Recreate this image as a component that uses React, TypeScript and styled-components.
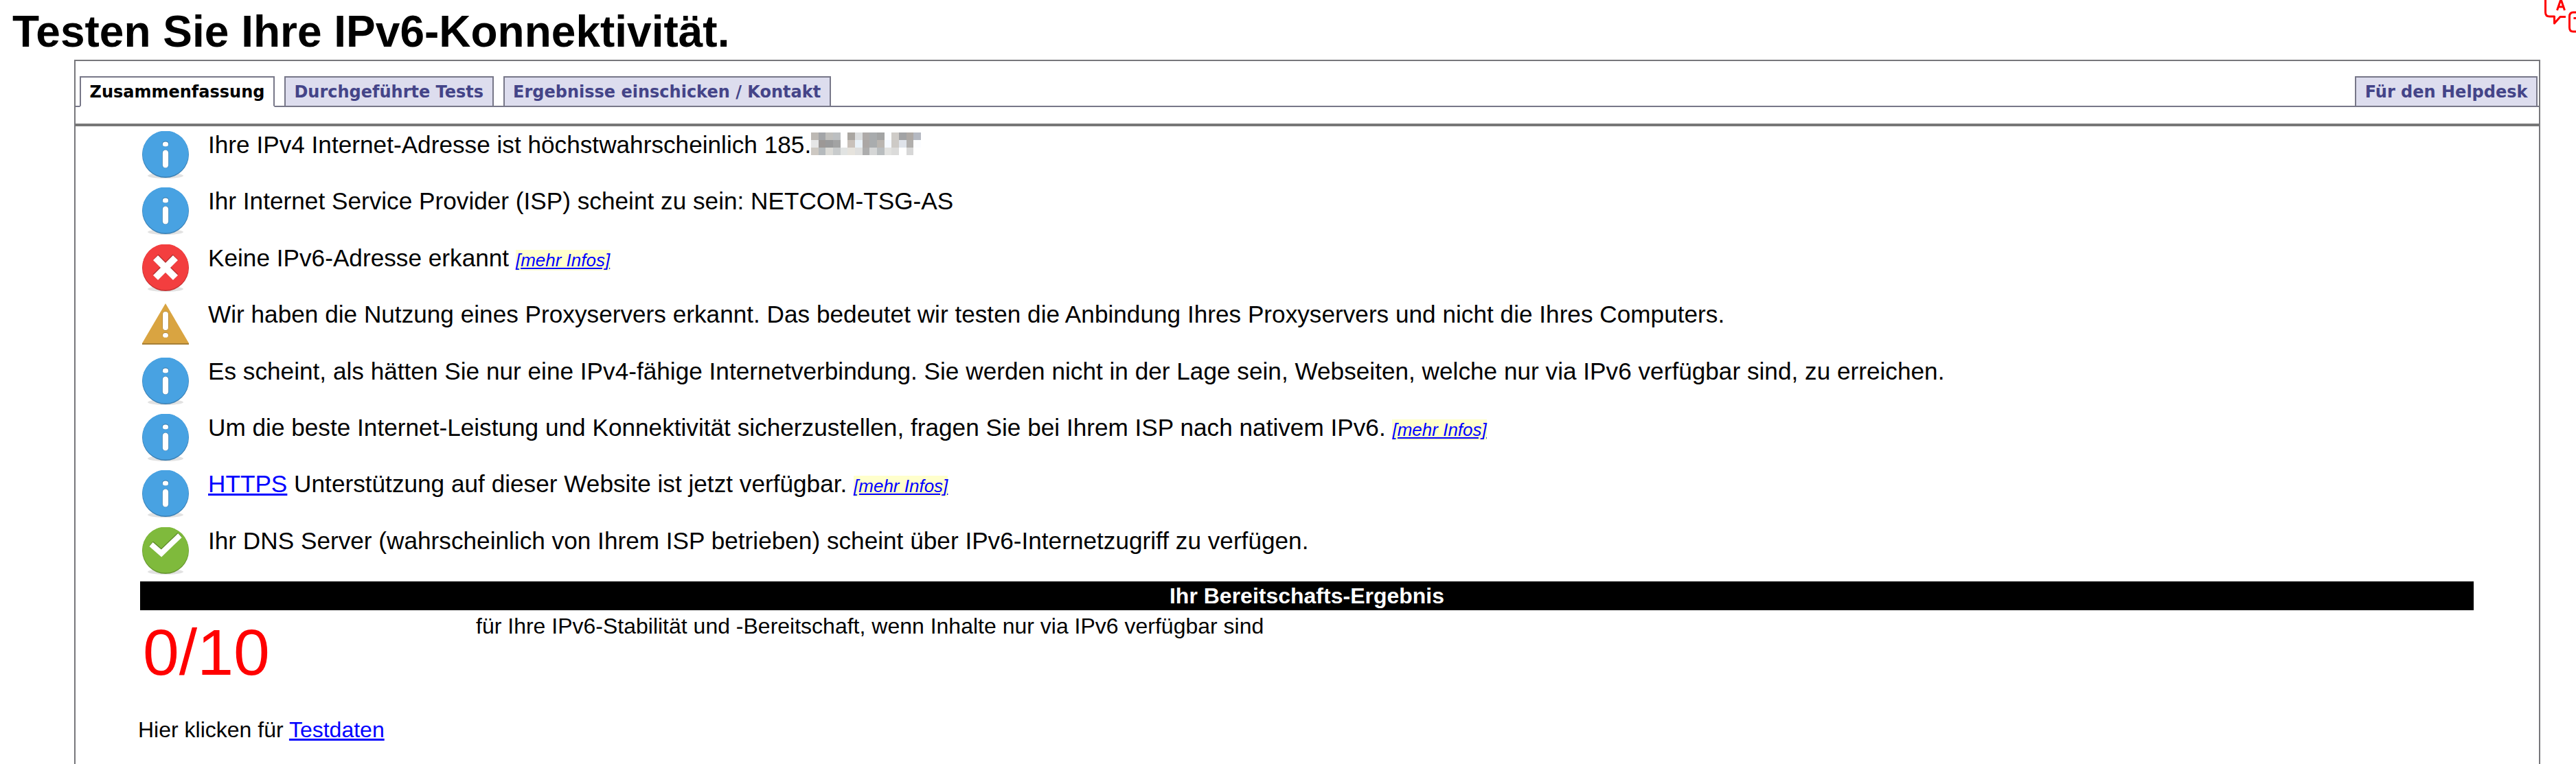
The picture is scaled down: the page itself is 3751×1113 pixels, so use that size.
import React from 'react';
import styled, { createGlobalStyle } from 'styled-components';

const GlobalStyle = createGlobalStyle`
  html, body {
    margin: 0;
    padding: 0;
    background: #fff;
    color: #000;
    overflow: hidden;
  }
  body {
    font-family: 'Liberation Sans', Arial, sans-serif;
  }
`;

const Page = styled.div`
  position: relative;
  width: 3751px;
  height: 1113px;
  overflow: hidden;
`;

const Title = styled.h1`
  margin: 0;
  padding: 10px 0 0 18px;
  height: 87px;
  box-sizing: border-box;
  font-size: 64px;
  line-height: 73px;
  font-weight: 700;
  white-space: nowrap;
`;

const Frame = styled.div`
  box-sizing: border-box;
  margin-left: 108px;
  width: 3591px;
  height: 1026px;
  border: 2px solid #77777b;
  border-bottom: none;
`;

const TabBar = styled.div`
  display: flex;
  align-items: flex-end;
  height: 67px;
  padding: 0 0 0 6px;
  box-sizing: border-box;
  border-bottom: 2px solid #778;
`;

const Tab = styled.a<{ $active?: boolean; $right?: boolean }>`
  box-sizing: border-box;
  height: 45px;
  margin-right: ${(p) => (p.$right ? '2px' : '14px')};
  margin-left: ${(p) => (p.$right ? 'auto' : '0')};
  margin-bottom: -2px;
  padding: 0 12.5px;
  display: flex;
  align-items: center;
  border: 2px solid #778;
  border-bottom: ${(p) => (p.$active ? '2px solid #fff' : '2px solid #778')};
  background: ${(p) => (p.$active ? '#fff' : '#dde')};
  color: ${(p) => (p.$active ? '#000' : '#448')};
  font-family: 'DejaVu Sans', Verdana, sans-serif;
  font-size: 24px;
  font-weight: 700;
  white-space: nowrap;
`;

const Divider = styled.div`
  margin-top: 24px;
  height: 4px;
  background: #777;
`;

const Results = styled.div`
  padding: 7px 0 0 97px;
`;

const Row = styled.div`
  display: flex;
  align-items: flex-start;
  height: 82.4px;
`;

const IconSlot = styled.div`
  width: 68px;
  height: 70px;
  margin-right: 28px;
  flex: none;
`;

const Message = styled.div`
  font-size: 35.2px;
  line-height: 40px;
  white-space: nowrap;
`;

const Link = styled.a`
  color: #00f;
  text-decoration: underline;
`;

const MoreInfo = styled.a`
  background: #ffc;
  color: #00f;
  font-size: 26px;
  font-style: italic;
  text-decoration: underline;
`;

const BlurBox = styled.svg`
  display: inline-block;
  vertical-align: -3px;
`;

const ScoreHeader = styled.div`
  margin: -3px 0 0 -3px;
  width: 3398px;
  height: 42px;
  background: #000;
  color: #fff;
  font-size: 32px;
  font-weight: 700;
  line-height: 43px;
  text-align: center;
`;

const ScoreRow = styled.div`
  display: flex;
  align-items: flex-start;
`;

const ScoreValue = styled.div`
  width: 486px;
  padding: 6px 0 0 1px;
  box-sizing: border-box;
  color: #f00;
  font-size: 95px;
  line-height: 110px;
`;

const ScoreText = styled.div`
  padding-top: 5px;
  font-size: 32px;
  line-height: 37px;
  white-space: nowrap;
`;

const TestData = styled.div`
  margin: 40px 0 0 -6px;
  font-size: 32px;
  line-height: 37px;
`;

const CornerIcon = styled.svg`
  position: absolute;
  top: 0;
  left: 3700px;
`;

type Kind = 'info' | 'error' | 'warn' | 'ok';

const palette: Record<Kind, { fill: string; edge: string }> = {
  info: { fill: '#48a2e2', edge: '#3a7fb3' },
  error: { fill: '#f33e3f', edge: '#c23132' },
  warn: { fill: '#d9a441', edge: '#a67f36' },
  ok: { fill: '#7fba3c', edge: '#659430' },
};

const shade = 'rgba(0,0,0,0.28)';

const StatusIcon = ({ kind }: { kind: Kind }) => {
  const { fill, edge } = palette[kind];
  if (kind === 'warn') {
    return (
      <svg width={68} height={70} viewBox="0 0 68 70">
        <path d="M34 4 L68 62 L68 64 L0 64 L0 62 Z" fill={fill} />
        <rect x="0" y="62" width="68" height="2" fill={edge} />
        <rect x="29.5" y="15.5" width="9" height="28" rx="4.5" fill={shade} />
        <rect x="30" y="16" width="8" height="27" rx="4" fill="#fff" />
        <ellipse cx="34" cy="50" rx="4.4" ry="3.8" fill={shade} />
        <ellipse cx="34" cy="50.4" rx="4" ry="3.4" fill="#fff" />
      </svg>
    );
  }
  return (
    <svg width={68} height={70} viewBox="0 0 68 70">
      <ellipse cx="34" cy="65" rx="26" ry="4" fill="#e2e2e2" />
      <circle cx="34" cy="34" r="34" fill={edge} />
      <circle cx="34" cy="33" r="33.5" fill={fill} />
      {kind === 'info' && (
        <>
          <ellipse cx="34" cy="18.6" rx="4.8" ry="4.2" fill={shade} />
          <ellipse cx="34" cy="19" rx="4.2" ry="3.6" fill="#fff" />
          <rect x="29.2" y="27" width="9.6" height="27" rx="4.8" fill={shade} />
          <rect x="29.8" y="27.6" width="8.4" height="26" rx="4.2" fill="#fff" />
        </>
      )}
      {kind === 'error' && (
        <>
          <path d="M19.5 18.5 L48.5 47.5 M48.5 18.5 L19.5 47.5" stroke={shade} strokeWidth="11" />
          <path d="M19.5 19.5 L48.5 48.5 M48.5 19.5 L19.5 48.5" stroke="#fff" strokeWidth="10" />
        </>
      )}
      {kind === 'ok' && (
        <>
          <path d="M13 24 L28 37 L55 11" stroke={shade} strokeWidth="9" fill="none" />
          <path d="M13 25 L28 38 L55 12" stroke="#fff" strokeWidth="8" fill="none" />
        </>
      )}
    </svg>
  );
};

const blurCells = [
  ['#bdb9b4', '#a3a5a8', '#c0bfbc', '#bcbfc1', '#fff', '#aaa6a1', '#dcdedf', '#aeaaa8', '#a8abad', '#a3a4a4', '#fcfdff', '#cfccc8', '#a2a3a5', '#aea9a5', '#b5b9c2'],
  ['#e6e6e6', '#9c9896', '#999a9b', '#a2a3a3', '#fff', '#c9c1ba', '#e9f1f8', '#aba7a5', '#a9acae', '#bab5b0', '#f5f9ff', '#cdcac6', '#dfe3ea', '#b1afad', '#fcfdff'],
  ['#cdc8c2', '#b5babd', '#dbdad6', '#c8cbcc', '#e1e3e2', '#e6e3dd', '#dfdfde', '#adadad', '#d5d6d6', '#b9bdbf', '#e2e2e0', '#dbdbda', '#fff', '#d7d7d7', '#fff'],
];

const BlurredAddress = () => (
  <BlurBox width={160} height={33} viewBox="0 0 160 33" shapeRendering="crispEdges">
    {blurCells.map((row, y) =>
      row.map((c, x) => (
        <rect key={`${x}-${y}`} x={x * 10.67} y={y * 11} width={10.67} height={11} fill={c} />
      ))
    )}
  </BlurBox>
);

const TranslateIcon = () => (
  <CornerIcon width={51} height={60} viewBox="0 0 51 60" fill="none" stroke="#f00" strokeWidth="3" strokeLinejoin="round">
    <path d="M6.5 -5 V18 Q6.5 24 12.5 24 H19.5 V34 L28 24.5 H36" />
    <path d="M23.5 15 L29 -1 L34.5 15 M25.5 10 H32.5" />
    <path d="M55 18 H47 Q41.5 18 41.5 24 V40 Q41.5 46 47 46 H55" />
    <path d="M47.5 26.5 H53" />
  </CornerIcon>
);

const App = () => {
  return (
    <Page>
      <GlobalStyle />
      <Title>Testen Sie Ihre IPv6-Konnektivität.</Title>
      <TranslateIcon />
      <Frame>
        <TabBar>
          <Tab $active>Zusammenfassung</Tab>
          <Tab>Durchgeführte Tests</Tab>
          <Tab>Ergebnisse einschicken / Kontakt</Tab>
          <Tab $right>Für den Helpdesk</Tab>
        </TabBar>
        <Divider />
        <Results>
          <Row>
            <IconSlot><StatusIcon kind="info" /></IconSlot>
            <Message>Ihre IPv4 Internet-Adresse ist höchstwahrscheinlich 185.<BlurredAddress /></Message>
          </Row>
          <Row>
            <IconSlot><StatusIcon kind="info" /></IconSlot>
            <Message>Ihr Internet Service Provider (ISP) scheint zu sein: NETCOM-TSG-AS</Message>
          </Row>
          <Row>
            <IconSlot><StatusIcon kind="error" /></IconSlot>
            <Message>Keine IPv6-Adresse erkannt <MoreInfo>[mehr Infos]</MoreInfo></Message>
          </Row>
          <Row>
            <IconSlot><StatusIcon kind="warn" /></IconSlot>
            <Message>Wir haben die Nutzung eines Proxyservers erkannt. Das bedeutet wir testen die Anbindung Ihres Proxyservers und nicht die Ihres Computers.</Message>
          </Row>
          <Row>
            <IconSlot><StatusIcon kind="info" /></IconSlot>
            <Message>Es scheint, als hätten Sie nur eine IPv4-fähige Internetverbindung. Sie werden nicht in der Lage sein, Webseiten, welche nur via IPv6 verfügbar sind, zu erreichen.</Message>
          </Row>
          <Row>
            <IconSlot><StatusIcon kind="info" /></IconSlot>
            <Message>Um die beste Internet-Leistung und Konnektivität sicherzustellen, fragen Sie bei Ihrem ISP nach nativem IPv6. <MoreInfo>[mehr Infos]</MoreInfo></Message>
          </Row>
          <Row>
            <IconSlot><StatusIcon kind="info" /></IconSlot>
            <Message><Link>HTTPS</Link> Unterstützung auf dieser Website ist jetzt verfügbar. <MoreInfo>[mehr Infos]</MoreInfo></Message>
          </Row>
          <Row>
            <IconSlot><StatusIcon kind="ok" /></IconSlot>
            <Message>Ihr DNS Server (wahrscheinlich von Ihrem ISP betrieben) scheint über IPv6-Internetzugriff zu verfügen.</Message>
          </Row>
          <ScoreHeader>Ihr Bereitschafts-Ergebnis</ScoreHeader>
          <ScoreRow>
            <ScoreValue>0/10</ScoreValue>
            <ScoreText>für Ihre IPv6-Stabilität und -Bereitschaft, wenn Inhalte nur via IPv6 verfügbar sind</ScoreText>
          </ScoreRow>
          <TestData>Hier klicken für <Link>Testdaten</Link></TestData>
        </Results>
      </Frame>
    </Page>
  );
};

export default App;
